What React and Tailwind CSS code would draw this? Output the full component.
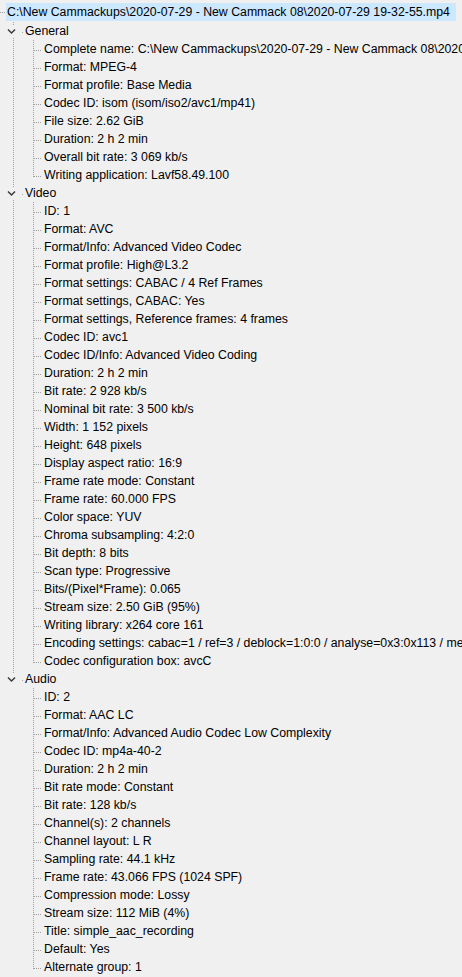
import React from "react";

const sections = [
  {
    title: "General",
    items: [
      "Complete name: C:\\New Cammackups\\2020-07-29 - New Cammack 08\\2020-07-29 19-32-55.mp4",
      "Format: MPEG-4",
      "Format profile: Base Media",
      "Codec ID: isom (isom/iso2/avc1/mp41)",
      "File size: 2.62 GiB",
      "Duration: 2 h 2 min",
      "Overall bit rate: 3 069 kb/s",
      "Writing application: Lavf58.49.100",
    ],
  },
  {
    title: "Video",
    items: [
      "ID: 1",
      "Format: AVC",
      "Format/Info: Advanced Video Codec",
      "Format profile: High@L3.2",
      "Format settings: CABAC / 4 Ref Frames",
      "Format settings, CABAC: Yes",
      "Format settings, Reference frames: 4 frames",
      "Codec ID: avc1",
      "Codec ID/Info: Advanced Video Coding",
      "Duration: 2 h 2 min",
      "Bit rate: 2 928 kb/s",
      "Nominal bit rate: 3 500 kb/s",
      "Width: 1 152 pixels",
      "Height: 648 pixels",
      "Display aspect ratio: 16:9",
      "Frame rate mode: Constant",
      "Frame rate: 60.000 FPS",
      "Color space: YUV",
      "Chroma subsampling: 4:2:0",
      "Bit depth: 8 bits",
      "Scan type: Progressive",
      "Bits/(Pixel*Frame): 0.065",
      "Stream size: 2.50 GiB (95%)",
      "Writing library: x264 core 161",
      "Encoding settings: cabac=1 / ref=3 / deblock=1:0:0 / analyse=0x3:0x113 / me=hex / subme=7 / psy=1",
      "Codec configuration box: avcC",
    ],
  },
  {
    title: "Audio",
    items: [
      "ID: 2",
      "Format: AAC LC",
      "Format/Info: Advanced Audio Codec Low Complexity",
      "Codec ID: mp4a-40-2",
      "Duration: 2 h 2 min",
      "Bit rate mode: Constant",
      "Bit rate: 128 kb/s",
      "Channel(s): 2 channels",
      "Channel layout: L R",
      "Sampling rate: 44.1 kHz",
      "Frame rate: 43.066 FPS (1024 SPF)",
      "Compression mode: Lossy",
      "Stream size: 112 MiB (4%)",
      "Title: simple_aac_recording",
      "Default: Yes",
      "Alternate group: 1",
    ],
  },
];

function Dash(props) {
  return (
    <line
      {...props}
      stroke="#a0a0a0"
      strokeWidth="1"
      strokeDasharray="1 1"
      shapeRendering="crispEdges"
    />
  );
}

function SectionGutter({ last }) {
  return (
    <svg width="25" height="18" className="shrink-0 block">
      <Dash x1="13.5" y1="0" x2="13.5" y2={last ? 10 : 18} />
      <Dash x1="14" y1="10.5" x2="24" y2="10.5" />
      <rect x="6" y="4" width="15" height="12" fill="#f0f0f0" />
      <polyline points="8,7.5 11.5,11 15,7.5" fill="none" stroke="#3a3a3a" strokeWidth="1.5" />
    </svg>
  );
}

function ItemGutter({ topLine, last }) {
  return (
    <svg width="44" height="18" className="shrink-0 block">
      {topLine && <Dash x1="13.5" y1="0" x2="13.5" y2="18" />}
      <Dash x1="33.5" y1="0" x2="33.5" y2={last ? 11 : 18} />
      <Dash x1="34" y1="10.5" x2="42" y2="10.5" />
    </svg>
  );
}

export default function App() {
  return (
    <div className="w-[462px] h-[977px] overflow-hidden bg-[#f0f0f0] text-black text-[12.3px] leading-[18px] pt-[3px] font-['Liberation_Sans',Arial,sans-serif]">
      <div className="flex h-[19px] items-start">
        <svg width="6" height="18" className="shrink-0 block">
          <Dash x1="0" y1="9.5" x2="5" y2="9.5" />
        </svg>
        <div className="w-[450px] h-[18px] bg-[#cce8ff] pl-[1px] whitespace-nowrap overflow-hidden">
          C:\New Cammackups\2020-07-29 - New Cammack 08\2020-07-29 19-32-55.mp4
        </div>
      </div>
      {sections.map((s, si) => {
        const lastSection = si === sections.length - 1;
        return (
          <div key={s.title} className="flex flex-col">
            <div className="flex h-[18px] items-center whitespace-nowrap">
              <SectionGutter last={lastSection} />
              <span>{s.title}</span>
            </div>
            {s.items.map((it, ii) => (
              <div key={ii} className="flex h-[18px] items-center whitespace-nowrap">
                <ItemGutter topLine={!lastSection} last={ii === s.items.length - 1} />
                <span>{it}</span>
              </div>
            ))}
          </div>
        );
      })}
    </div>
  );
}
